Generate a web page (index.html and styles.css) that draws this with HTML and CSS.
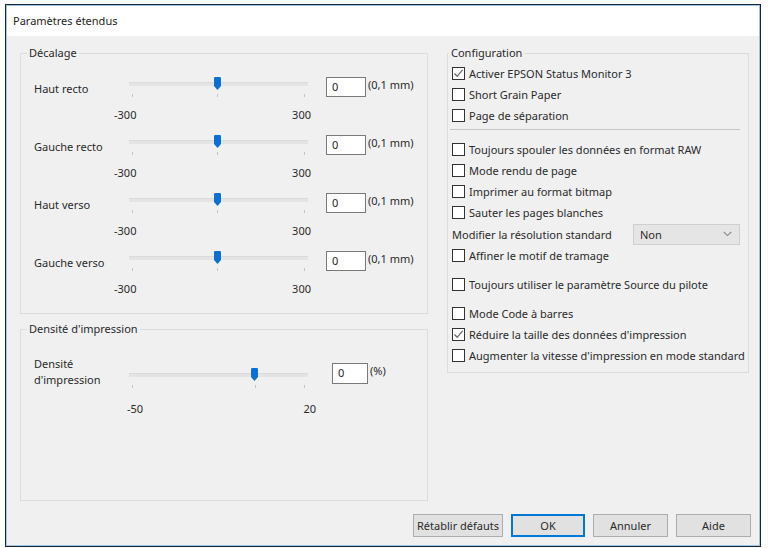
FILE: index.html
```html
<!DOCTYPE html>
<html lang="fr">
<head>
<meta charset="utf-8">
<title>Paramètres étendus</title>
<link rel="stylesheet" href="styles.css">
</head>
<body>
<div class="window">
  <div class="titlebar">Paramètres étendus</div>
  <div class="content">
    <div class="main">
      <div class="col-left">
        <fieldset class="group group-offset">
          <legend>Décalage</legend>
          <div class="group-inner offset-inner">
            <div class="srow">
              <div class="slabel">Haut recto</div>
              <div class="slider"><div class="track"></div><i class="tick t0"></i><i class="tick tm"></i><i class="tick t1"></i><div class="thumb" style="left:85px"><svg width="7" height="13" viewBox="0 0 7 13"><path d="M0 1.2Q0 0 1.2 0H5.8Q7 0 7 1.2V9L3.5 13L0 9Z" fill="#0a6fd6"/></svg></div></div>
              <div class="numbox">0</div>
              <div class="unit">(0,1 mm)</div>
            </div>
            <div class="scale"><span>-300</span><span>300</span></div>

            <div class="srow">
              <div class="slabel">Gauche recto</div>
              <div class="slider"><div class="track"></div><i class="tick t0"></i><i class="tick tm"></i><i class="tick t1"></i><div class="thumb" style="left:85px"><svg width="7" height="13" viewBox="0 0 7 13"><path d="M0 1.2Q0 0 1.2 0H5.8Q7 0 7 1.2V9L3.5 13L0 9Z" fill="#0a6fd6"/></svg></div></div>
              <div class="numbox">0</div>
              <div class="unit">(0,1 mm)</div>
            </div>
            <div class="scale"><span>-300</span><span>300</span></div>

            <div class="srow">
              <div class="slabel">Haut verso</div>
              <div class="slider"><div class="track"></div><i class="tick t0"></i><i class="tick tm"></i><i class="tick t1"></i><div class="thumb" style="left:85px"><svg width="7" height="13" viewBox="0 0 7 13"><path d="M0 1.2Q0 0 1.2 0H5.8Q7 0 7 1.2V9L3.5 13L0 9Z" fill="#0a6fd6"/></svg></div></div>
              <div class="numbox">0</div>
              <div class="unit">(0,1 mm)</div>
            </div>
            <div class="scale"><span>-300</span><span>300</span></div>

            <div class="srow">
              <div class="slabel">Gauche verso</div>
              <div class="slider"><div class="track"></div><i class="tick t0"></i><i class="tick tm"></i><i class="tick t1"></i><div class="thumb" style="left:85px"><svg width="7" height="13" viewBox="0 0 7 13"><path d="M0 1.2Q0 0 1.2 0H5.8Q7 0 7 1.2V9L3.5 13L0 9Z" fill="#0a6fd6"/></svg></div></div>
              <div class="numbox">0</div>
              <div class="unit">(0,1 mm)</div>
            </div>
            <div class="scale"><span>-300</span><span>300</span></div>
          </div>
        </fieldset>

        <fieldset class="group group-density">
          <legend>Densité d'impression</legend>
          <div class="group-inner density-inner">
            <div class="srow srow-density">
              <div class="slabel slabel-2">Densité<br>d'impression</div>
              <div class="slider"><div class="track"></div><i class="tick t0"></i><i class="tick tm" style="left:126px"></i><i class="tick t1"></i><div class="thumb" style="left:122px"><svg width="7" height="13" viewBox="0 0 7 13"><path d="M0 1.2Q0 0 1.2 0H5.8Q7 0 7 1.2V9L3.5 13L0 9Z" fill="#0a6fd6"/></svg></div></div>
              <div class="numbox numbox-density">0</div>
              <div class="unit">(%)</div>
            </div>
            <div class="scale scale-density"><span>-50</span><span>20</span></div>
          </div>
        </fieldset>
      </div>

      <fieldset class="group group-config">
        <legend>Configuration</legend>
        <div class="group-inner config-inner">
          <div class="cb checked"><span class="box"><svg width="11" height="11" viewBox="0 0 11 11"><path d="M1.5 5.5L4.2 8.3L9.6 1.8" fill="none" stroke="#6b6b6b" stroke-width="1.3"/></svg></span>Activer EPSON Status Monitor 3</div>
          <div class="cb"><span class="box"></span>Short Grain Paper</div>
          <div class="cb"><span class="box"></span>Page de séparation</div>
          <div class="sep"></div>
          <div class="cb"><span class="box"></span>Toujours spouler les données en format RAW</div>
          <div class="cb"><span class="box"></span>Mode rendu de page</div>
          <div class="cb"><span class="box"></span>Imprimer au format bitmap</div>
          <div class="cb"><span class="box"></span>Sauter les pages blanches</div>
          <div class="selrow">
            <span class="sellabel">Modifier la résolution standard</span>
            <div class="select"><span>Non</span><svg width="9" height="6" viewBox="0 0 9 6"><path d="M0.8 1L4.5 4.6L8.2 1" fill="none" stroke="#8a8a8a" stroke-width="1.1"/></svg></div>
          </div>
          <div class="cb"><span class="box"></span>Affiner le motif de tramage</div>
          <div class="cb cb-gap"><span class="box"></span>Toujours utiliser le paramètre Source du pilote</div>
          <div class="cb cb-gap"><span class="box"></span>Mode Code à barres</div>
          <div class="cb checked"><span class="box"><svg width="11" height="11" viewBox="0 0 11 11"><path d="M1.5 5.5L4.2 8.3L9.6 1.8" fill="none" stroke="#6b6b6b" stroke-width="1.3"/></svg></span>Réduire la taille des données d'impression</div>
          <div class="cb"><span class="box"></span>Augmenter la vitesse d'impression en mode standard</div>
        </div>
      </fieldset>
    </div>

    <div class="buttons">
      <button class="btn btn-wide">Rétablir défauts</button>
      <button class="btn btn-default">OK</button>
      <button class="btn">Annuler</button>
      <button class="btn">Aide</button>
    </div>
  </div>
</div>
</body>
</html>
```

FILE: styles.css
```css
* { box-sizing: border-box; }

html, body {
  margin: 0;
  padding: 0;
  background: #ffffff;
}

body {
  font-family: "Segoe UI", "Noto Sans", "Open Sans", sans-serif;
  font-size: 11px;
  color: #1e1e1e;
  padding: 4px 0 0 5px;
}

.window {
  width: 756px;
  height: 543px;
  border: 1px solid #1c2633;
  box-shadow: inset 0 0 0 1px #9fc3e8;
  background: #f0f0f0;
  display: flex;
  flex-direction: column;
}

.titlebar {
  height: 30px;
  margin: 1px 1px 0 1px;
  background: #ffffff;
  padding-left: 6px;
  line-height: 30px;
  font-size: 11px;
  color: #1e1e1e;
}

.content {
  flex: 1;
  display: flex;
  flex-direction: column;
  padding: 10px 9px 9px 14px;
}

.main {
  display: grid;
  grid-template-columns: 408px 302px;
  column-gap: 19px;
  height: 455px;
  align-items: start;
}

.col-left {
  display: flex;
  flex-direction: column;
  height: 455px;
}

.group {
  margin: 0;
  padding: 0;
  border: 1px solid #dcdcdc;
  min-width: 0;
}

.group legend {
  padding: 0 2px;
  margin-left: 6px;
  line-height: 14px;
  color: #2a2a2a;
}

.group-config legend {
  margin-left: 1px;
}

.offset-inner {
  padding: 17px 0 17px 13px;
}

.group-density {
  margin-top: 8px;
  flex: 1;
}

.density-inner {
  padding: 20px 0 0 13px;
}

/* slider rows */
.srow {
  display: flex;
  align-items: flex-start;
  height: 20px;
}

.slabel {
  width: 95px;
  line-height: 14px;
  margin-top: 5px;
  color: #2a2a2a;
}

.slider {
  position: relative;
  width: 179px;
  height: 21px;
  margin-top: 0;
}

.track {
  position: absolute;
  left: 0;
  right: 0;
  top: 5px;
  height: 4px;
  background: #e4e4e4;
  border-top: 1px solid #dadada;
}

.tick {
  position: absolute;
  top: 17px;
  width: 1px;
  height: 3px;
  background: #c4c4c4;
}
.t0 { left: 3px; }
.tm { left: 88px; }
.t1 { left: 175px; }

.thumb {
  position: absolute;
  top: 0;
  width: 7px;
  height: 13px;
  line-height: 0;
}

.numbox {
  width: 40px;
  height: 20px;
  margin-left: 18px;
  border: 1px solid #7a7a7a;
  background: #ffffff;
  padding-left: 5px;
  line-height: 18px;
  color: #1e1e1e;
}

.unit {
  margin-left: 2px;
  margin-top: 1px;
  line-height: 14px;
  color: #2a2a2a;
  white-space: nowrap;
}

.scale {
  display: flex;
  justify-content: space-between;
  width: 197px;
  margin: 11px 0 13px 80px;
  line-height: 14px;
  color: #2a2a2a;
}

.offset-inner .scale:last-child {
  margin-bottom: 0;
}

/* density */
.srow-density {
  height: 34px;
}

.slabel-2 {
  margin-top: 0;
  line-height: 16px;
}

.srow-density .slider {
  margin-top: 12px;
}

.numbox-density {
  width: 36px;
  height: 21px;
  margin-left: 24px;
  margin-top: 7px;
}

.srow-density .unit {
  margin-top: 8px;
}

.scale-density {
  width: 189px;
  margin: 12px 0 0 93px;
}

/* configuration */
.group-config {
  height: 327px;
}

.config-inner {
  padding: 3px 0 0 4px;
}

.cb {
  display: flex;
  align-items: center;
  height: 21px;
  line-height: 14px;
  color: #2a2a2a;
  white-space: nowrap;
}

.cb-gap {
  margin-top: 8px;
}

.box {
  width: 13px;
  height: 13px;
  border: 1px solid #333333;
  background: #ffffff;
  margin-right: 4px;
  flex: none;
  display: flex;
  align-items: center;
  justify-content: center;
}

.sep {
  height: 1px;
  background: #c8c8c8;
  margin: 3px 8px 9px -2px;
}

.selrow {
  display: flex;
  align-items: center;
  height: 22px;
}

.sellabel {
  width: 181px;
  color: #2a2a2a;
  white-space: nowrap;
}

.select {
  width: 107px;
  height: 21px;
  background: #e5e5e5;
  border: 1px solid #cfcfcf;
  display: flex;
  align-items: center;
  justify-content: space-between;
  padding: 0 7px 0 6px;
  color: #2a2a2a;
}

/* buttons */
.buttons {
  display: flex;
  justify-content: flex-end;
  gap: 8px;
  margin-top: 13px;
}

.btn {
  width: 75px;
  height: 23px;
  font-family: inherit;
  font-size: 11px;
  color: #2a2a2a;
  background: #e1e1e1;
  border: 1px solid #adadad;
  padding: 0;
}

.btn-wide {
  width: 90px;
}

.btn-default {
  width: 74px;
  border-color: #0078d7;
  box-shadow: inset 0 0 0 1px #0078d7;
}
```
